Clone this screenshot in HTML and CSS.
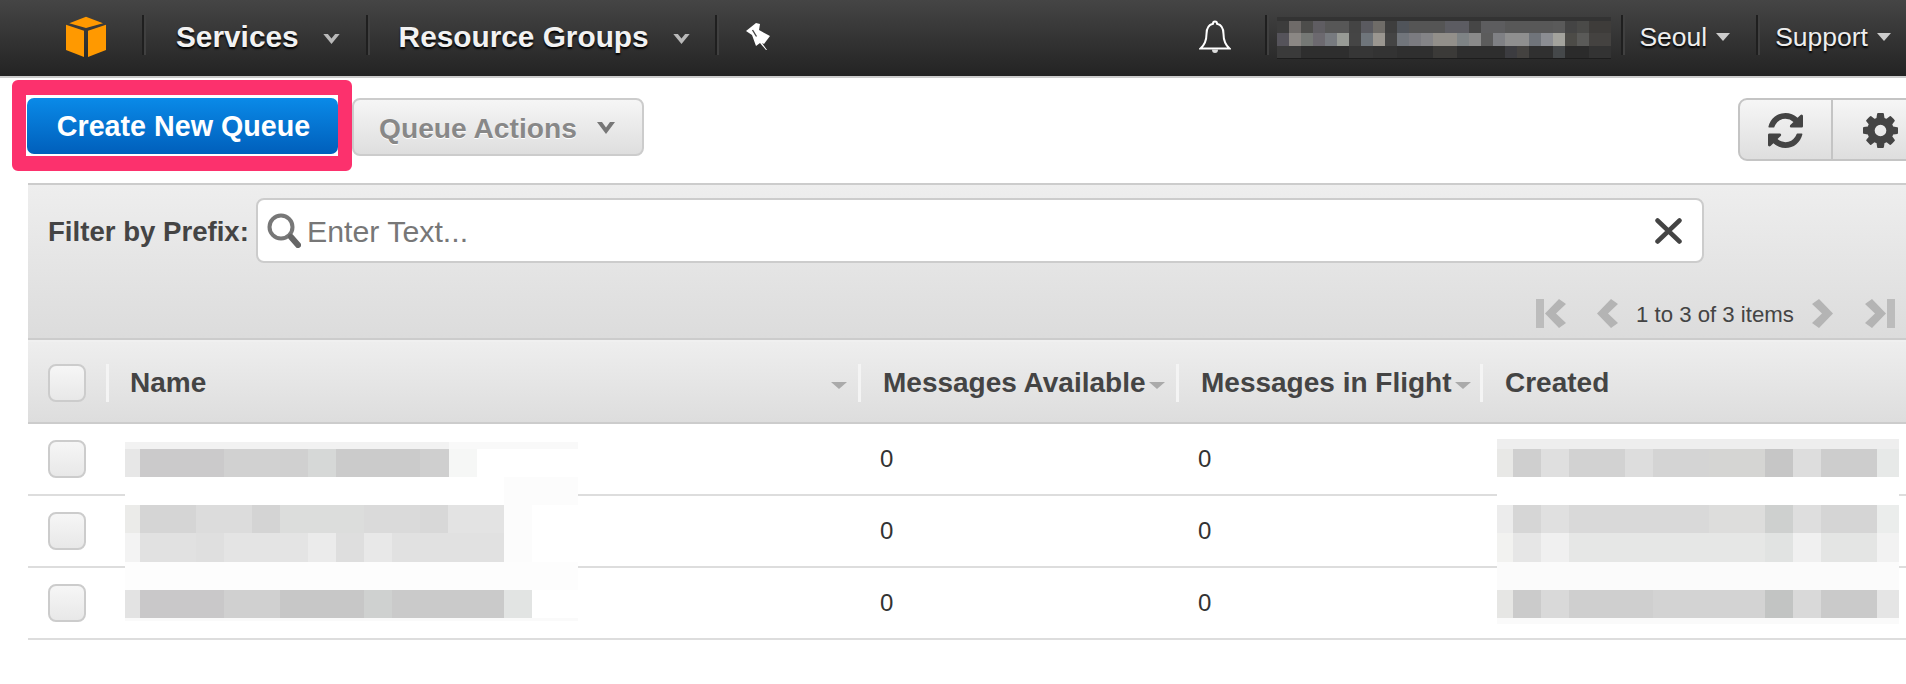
FILE: index.html
```html
<!DOCTYPE html>
<html lang="en">
<head>
<meta charset="utf-8">
<title>Simple Queue Service</title>
<link rel="stylesheet" href="styles.css">
</head>
<body>
<header class="nav">
  <svg class="logo" viewBox="0 0 40 41" aria-hidden="true"><path d="M20 .7 37 7.3 20 12 3.3 7.3z"/><path d="M0 8.7 18 14.7V41L0 34z"/><path d="M40 8.7 22 14.7V41L40 34z"/></svg>
  <span class="sep sep-logo"></span>
  <span class="nav-strong services">Services</span>
  <svg class="nav-chev" viewBox="0 0 18 11" aria-hidden="true"><path d="M0 0h5l4 5 4-5h5L9 11z"/></svg>
  <span class="sep sep-after-chev"></span>
  <span class="nav-strong groups">Resource Groups</span>
  <svg class="nav-chev" viewBox="0 0 18 11" aria-hidden="true"><path d="M0 0h5l4 5 4-5h5L9 11z"/></svg>
  <span class="sep sep-after-chev2"></span>
  <svg class="pin" viewBox="0 0 24 27" aria-hidden="true"><path fill="#fff" d="M10 0 14 1 13 7 24 13 18 21 16 20 21 27H20L14 20 10 23 6 12 0 8z"/><path stroke="#444" stroke-width="1.4" d="M6.500 7 10.500 13.500"/></svg>
  <svg class="bell" viewBox="0 0 32 34" aria-hidden="true"><path fill="none" stroke="#fff" stroke-width="2" d="M16 1.500c-1 0-2 .8-2 2.300C9 5 7.500 9 7.500 14c0 6-2 11-6 14.500h29c-4-3.500-6-8.500-6-14.500 0-5-1.500-9-6.500-10.200 0-1.500-1-2.300-2-2.300z"/><path fill="#ddd" d="M13 29.500h6a3 3.500 0 0 1-6 0z"/></svg>
  <span class="sep sep-bell"></span>
  <svg class="account" viewBox="0 0 334 42" shape-rendering="crispEdges" aria-hidden="true">
    <rect width="334" height="42" fill="#333"/>
    <g transform="translate(0 4)">
      <rect width="12" height="12" fill="#3c3c3c"/><rect x="12" width="12" height="12" fill="#6f6b69"/><rect x="24" width="12" height="12" fill="#4d4d4b"/><rect x="36" width="12" height="12" fill="#5f5d62"/><rect x="48" width="24" height="12" fill="#575757"/><rect x="72" width="12" height="12" fill="#444"/><rect x="84" width="12" height="12" fill="#5a5a60"/><rect x="96" width="12" height="12" fill="#6f6c68"/><rect x="108" width="12" height="12" fill="#3e3e3e"/><rect x="120" width="12" height="12" fill="#50545a"/><rect x="132" width="36" height="12" fill="#555"/><rect x="168" width="24" height="12" fill="#5c5c62"/><rect x="192" width="12" height="12" fill="#464646"/><rect x="204" width="24" height="12" fill="#5d5d5f"/><rect x="228" width="48" height="12" fill="#585858"/><rect x="276" width="12" height="12" fill="#5a5a5a"/><rect x="288" width="12" height="12" fill="#444"/><rect x="300" width="12" height="12" fill="#4a4a48"/><rect x="312" width="22" height="12" fill="#3e3c3a"/>
    </g>
    <g transform="translate(0 16)">
      <rect width="12" height="13" fill="#55535a"/><rect x="12" width="12" height="13" fill="#8b8784"/><rect x="24" width="12" height="13" fill="#757875"/><rect x="36" width="12" height="13" fill="#6c696f"/><rect x="48" width="12" height="13" fill="#777a7f"/><rect x="60" width="12" height="13" fill="#979a95"/><rect x="72" width="12" height="13" fill="#454545"/><rect x="84" width="12" height="13" fill="#6f757b"/><rect x="96" width="12" height="13" fill="#9a9690"/><rect x="108" width="12" height="13" fill="#444"/><rect x="120" width="12" height="13" fill="#71757b"/><rect x="132" width="12" height="13" fill="#7b7b80"/><rect x="144" width="12" height="13" fill="#848487"/><rect x="156" width="24" height="13" fill="#928f8a"/><rect x="180" width="12" height="13" fill="#7e8385"/><rect x="192" width="12" height="13" fill="#8a8a8a"/><rect x="204" width="12" height="13" fill="#5c5c5c"/><rect x="216" width="12" height="13" fill="#7f8084"/><rect x="228" width="24" height="13" fill="#8f8f8f"/><rect x="252" width="12" height="13" fill="#70747a"/><rect x="264" width="12" height="13" fill="#8b8d92"/><rect x="276" width="12" height="13" fill="#a3a39d"/><rect x="288" width="12" height="13" fill="#4c4b47"/><rect x="300" width="12" height="13" fill="#5a5a58"/><rect x="312" width="22" height="13" fill="#444240"/>
    </g>
    <g transform="translate(0 29)">
      <rect width="24" height="12" fill="#3a3a3a"/><rect x="24" width="48" height="12" fill="#2e2e2e"/><rect x="72" width="24" height="12" fill="#363636"/><rect x="96" width="24" height="12" fill="#333"/><rect x="120" width="48" height="12" fill="#2f2f2f"/><rect x="156" width="24" height="12" fill="#3b3a38"/><rect x="180" width="48" height="12" fill="#2e2e2e"/><rect x="228" width="12" height="12" fill="#3c3c40"/><rect x="240" width="12" height="12" fill="#444240"/><rect x="252" width="24" height="12" fill="#303030"/><rect x="276" width="12" height="12" fill="#45484a"/><rect x="288" width="24" height="12" fill="#2b2b2b"/><rect x="312" width="22" height="12" fill="#333"/>
    </g>
    <rect y="41" width="334" height="1" fill="#1d1d1d"/>
  </svg>
  <span class="sep sep-account"></span>
  <span class="nav-light seoul">Seoul</span>
  <svg class="nav-caret" viewBox="0 0 14 8" aria-hidden="true"><path d="M0 0h14L7 8z"/></svg>
  <span class="sep sep-seoul"></span>
  <span class="nav-light support">Support</span>
  <svg class="nav-caret" viewBox="0 0 14 8" aria-hidden="true"><path d="M0 0h14L7 8z"/></svg>
</header>

<section class="toolbar">
  <div class="highlight"><button class="btn-primary">Create New Queue</button></div>
  <button class="btn-actions">Queue Actions
    <svg class="actions-chev" viewBox="0 0 18 12" aria-hidden="true"><path d="M0 0h5l4 5.500L13 0h5L9 12z"/></svg>
  </button>
  <div class="tools">
    <button class="tool tool-refresh"><svg class="tool-icon" viewBox="128 128 1536 1536" aria-hidden="true"><path d="M1639 1056q0 5-1 7-64 268-268 434.500t-478 166.500q-146 0-282.500-55t-243.500-157l-129 129q-19 19-45 19t-45-19-19-45v-448q0-26 19-45t45-19h448q26 0 45 19t19 45-19 45l-137 137q71 66 161 102t187 36q134 0 250-65t186-179q11-17 53-117 8-23 30-23h192q13 0 22.500 9.500t9.500 22.500zm25-800v448q0 26-19 45t-45 19h-448q-26 0-45-19t-19-45 19-45l138-138q-148-137-349-137-134 0-250 65t-186 179q-11 17-53 117-8 23-30 23h-199q-13 0-22.500-9.500t-9.500-22.500v-7q65-268 270-434.500t480-166.500q146 0 284 55.500t245 156.500l130-129q19-19 45-19t45 19 19 45z"/></svg></button>
    <button class="tool tool-gear"><svg class="tool-icon" viewBox="128 128 1536 1536" aria-hidden="true"><path d="M1152 896q0-106-75-181t-181-75-181 75-75 181 75 181 181 75 181-75 75-181zm512-109v222q0 12-8 23t-20 13l-185 28q-19 54-39 91 35 50 107 138 10 12 10 25t-9 23q-27 37-99 108t-94 71q-12 0-26-9l-138-108q-44 23-91 38-16 136-29 186-7 28-36 28h-222q-14 0-24.500-8.500t-11.500-21.500l-28-184q-49-16-90-37l-141 107q-10 9-25 9-14 0-25-11-126-114-165-168-7-10-7-23 0-12 8-23 15-21 51-66.500t54-70.500q-27-50-41-99l-183-27q-13-2-21-12.500t-8-23.500v-222q0-12 8-23t19-13l186-28q14-46 39-92-40-57-107-138-10-12-10-24 0-10 9-23 26-36 98.500-107.500t94.500-71.500q13 0 26 10l138 107q44-23 91-38 16-136 29-186 7-28 36-28h222q14 0 24.500 8.500t11.500 21.500l28 184q49 16 90 37l142-107q9-9 24-9 13 0 25 10 129 119 165 170 7 8 7 22 0 12-8 23-15 21-51 66.500t-54 70.500q26 50 41 98l183 28q13 2 21 12.500t8 23.500z"/></svg></button>
  </div>
</section>

<main class="panel">
  <div class="filter">
    <div class="filter-row">
      <label class="filter-label">Filter by Prefix:</label>
      <div class="search">
        <svg class="search-icon" viewBox="0 0 34 35" aria-hidden="true"><circle cx="14" cy="14" r="11.500" fill="none" stroke="#777" stroke-width="4"/><path stroke="#666" stroke-width="6" stroke-linecap="round" d="M24 24 31 32"/></svg>
        <span class="placeholder">Enter Text...</span>
        <svg class="clear" viewBox="0 0 27 26" aria-hidden="true"><path stroke="#444" stroke-width="4.500" stroke-linecap="round" d="M2.500 2.500 24.500 23.500M24.500 2.500 2.500 23.500"/></svg>
      </div>
    </div>
    <div class="pager">
      <svg class="pg-first" viewBox="0 0 30 29" aria-hidden="true"><rect width="8" height="29" fill="#bcbcbc"/><path fill="#b4b4b4" d="M23 0 30 5 20 14.500 30 24 23 29 9 14.500z"/></svg>
      <svg class="pg-prev" viewBox="0 0 21 29" aria-hidden="true"><path fill="#b4b4b4" d="M14 0 21 5 11 14.500 21 24 14 29 0 14.500z"/></svg>
      <span class="pg-text">1 to 3 of 3 items</span>
      <svg class="pg-next" viewBox="0 0 21 29" aria-hidden="true"><path fill="#b4b4b4" d="M7 0 0 5 10 14.500 0 24 7 29 21 14.500z"/></svg>
      <svg class="pg-last" viewBox="0 0 30 29" aria-hidden="true"><rect x="22" width="8" height="29" fill="#bcbcbc"/><path fill="#b4b4b4" d="M7 0 0 5 10 14.500 0 24 7 29 21 14.500z"/></svg>
    </div>
  </div>

  <div class="thead cols">
    <div class="cell-check"><span class="check"></span></div>
    <div class="th th-name"><span>Name</span><i class="sort sort-end"></i></div>
    <div class="th"><span>Messages Available</span><i class="sort"></i></div>
    <div class="th"><span>Messages in Flight</span><i class="sort"></i></div>
    <div class="th"><span>Created</span><i class="sort sort-end"></i></div>
  </div>

  <div class="rows">
    <div class="row cols"><div class="cell-check"><span class="check"></span></div><div></div><div class="td">0</div><div class="td">0</div><div></div></div>
    <div class="row cols"><div class="cell-check"><span class="check"></span></div><div></div><div class="td">0</div><div class="td">0</div><div></div></div>
    <div class="row cols"><div class="cell-check"><span class="check"></span></div><div></div><div class="td">0</div><div class="td">0</div><div></div></div>

    <svg class="redact redact-name" viewBox="0 0 453 179" shape-rendering="crispEdges" aria-hidden="true">
      <rect width="453" height="179" fill="#fff"/>
      <rect width="324" height="7" fill="#f2f2f2"/><rect x="324" width="129" height="7" fill="#f9f9f9"/>
      <g transform="translate(0 7)">
        <rect width="15" height="28" fill="#e7e7e7"/><rect x="15" width="84" height="28" fill="#cbcacb"/><rect x="99" width="56" height="28" fill="#d1d1d1"/><rect x="155" width="28" height="28" fill="#d0d0d0"/><rect x="183" width="28" height="28" fill="#d6d8d7"/><rect x="211" width="84" height="28" fill="#cbcbcb"/><rect x="295" width="29" height="28" fill="#cfcfcf"/><rect x="324" width="28" height="28" fill="#f6f7f6"/>
      </g>
      <rect x="379" y="35" width="74" height="28" fill="#fcfcfc"/>
      <g transform="translate(0 63)">
        <rect width="15" height="28" fill="#ebebe9"/><rect x="15" width="56" height="28" fill="#d5d5d5"/><rect x="71" width="56" height="28" fill="#dcdcdc"/><rect x="127" width="28" height="28" fill="#d4d4d4"/><rect x="155" width="84" height="28" fill="#dcdddc"/><rect x="239" width="56" height="28" fill="#dadada"/><rect x="295" width="28" height="28" fill="#d8d8d8"/><rect x="323" width="56" height="28" fill="#e3e3e3"/><rect x="379" width="28" height="28" fill="#fcfcfc"/>
      </g>
      <g transform="translate(0 91)">
        <rect width="15" height="29" fill="#f3f3f3"/><rect x="15" width="56" height="29" fill="#e1e1e1"/><rect x="71" width="28" height="29" fill="#dfdfdf"/><rect x="99" width="84" height="29" fill="#e4e4e4"/><rect x="183" width="28" height="29" fill="#ebebeb"/><rect x="211" width="28" height="29" fill="#dedede"/><rect x="239" width="28" height="29" fill="#e8e8e8"/><rect x="267" width="112" height="29" fill="#e1e1e1"/><rect x="379" width="28" height="29" fill="#fcfcfc"/>
      </g>
      <rect y="120" width="453" height="28" fill="#fdfdfd"/>
      <g transform="translate(0 148)">
        <rect width="15" height="28" fill="#e3e3e3"/><rect x="15" width="84" height="28" fill="#c9c8c9"/><rect x="99" width="56" height="28" fill="#d0d0d0"/><rect x="155" width="84" height="28" fill="#c7c7c7"/><rect x="239" width="28" height="28" fill="#cfd1d0"/><rect x="267" width="112" height="28" fill="#cacaca"/><rect x="379" width="28" height="28" fill="#e2e4e3"/>
      </g>
      <rect y="176" width="453" height="3" fill="#fafafa"/>
    </svg>

    <svg class="redact redact-date" viewBox="0 0 402 185" shape-rendering="crispEdges" aria-hidden="true">
      <rect width="402" height="185" fill="#fdfdfd"/>
      <rect width="402" height="10" fill="#eeeeee"/>
      <g transform="translate(0 10)">
        <rect width="16" height="28" fill="#e8e8e6"/><rect x="16" width="28" height="28" fill="#cfcfcf"/><rect x="44" width="28" height="28" fill="#dfdfdf"/><rect x="72" width="56" height="28" fill="#d2d2d2"/><rect x="128" width="28" height="28" fill="#dddddd"/><rect x="156" width="56" height="28" fill="#d4d4d4"/><rect x="212" width="56" height="28" fill="#d5d5d3"/><rect x="268" width="28" height="28" fill="#c6c6c6"/><rect x="296" width="28" height="28" fill="#dddddd"/><rect x="324" width="56" height="28" fill="#cdcdcd"/><rect x="380" width="22" height="28" fill="#e7e9e8"/>
      </g>
      <rect y="38" width="402" height="28" fill="#fff"/>
      <g transform="translate(0 66)">
        <rect width="16" height="28" fill="#ececec"/><rect x="16" width="28" height="28" fill="#d6d6d6"/><rect x="44" width="28" height="28" fill="#e0e0e0"/><rect x="72" width="140" height="28" fill="#d9d9d9"/><rect x="212" width="56" height="28" fill="#dddddc"/><rect x="268" width="28" height="28" fill="#ced0cf"/><rect x="296" width="28" height="28" fill="#dedede"/><rect x="324" width="56" height="28" fill="#d5d5d5"/><rect x="380" width="22" height="28" fill="#ebedec"/>
      </g>
      <g transform="translate(0 94)">
        <rect width="16" height="29" fill="#f2f2f0"/><rect x="16" width="28" height="29" fill="#e6e6e6"/><rect x="44" width="28" height="29" fill="#f0f0f0"/><rect x="72" width="196" height="29" fill="#e6e7e6"/><rect x="268" width="28" height="29" fill="#e1e3e2"/><rect x="296" width="28" height="29" fill="#f0f0f0"/><rect x="324" width="56" height="29" fill="#e4e5e4"/><rect x="380" width="22" height="29" fill="#f2f2f2"/>
      </g>
      <rect y="123" width="402" height="28" fill="#fbfbfb"/>
      <g transform="translate(0 151)">
        <rect width="16" height="28" fill="#e6e6e4"/><rect x="16" width="28" height="28" fill="#cbcbcb"/><rect x="44" width="28" height="28" fill="#d9d9d9"/><rect x="72" width="84" height="28" fill="#cfcfcf"/><rect x="156" width="112" height="28" fill="#d3d3d3"/><rect x="268" width="28" height="28" fill="#c2c4c3"/><rect x="296" width="28" height="28" fill="#d9d9d9"/><rect x="324" width="56" height="28" fill="#cacaca"/><rect x="380" width="22" height="28" fill="#e5e5e5"/>
      </g>
      <rect y="179" width="402" height="6" fill="#fafafa"/>
    </svg>
  </div>
</main>
</body>
</html>
```
FILE: styles.css
```css
* { box-sizing: border-box; }
html, body { margin: 0; padding: 0; }
body {
  width: 1906px;
  height: 684px;
  overflow: hidden;
  background: #fff;
  font-family: "Liberation Sans", Arial, sans-serif;
  color: #444;
}
button { font-family: inherit; padding: 0; cursor: pointer; }

/* top navigation */
.nav {
  display: flex;
  align-items: center;
  height: 78px;
  padding: 0 0 2px 66px;
  border-bottom: 2px solid #ccc;
  background: linear-gradient(#454545, #232323);
}
.logo { width: 40px; height: 41px; fill: #f90; margin-top: -1px; }
.sep {
  width: 4px;
  height: 40px;
  flex: none;
  border-left: 2px solid #1f1f1f;
  border-right: 2px solid #404040;
  margin-top: -4px;
}
.sep-logo { margin-left: 36px; margin-right: 30px; }
.nav-strong {
  font-size: 29.800px;
  font-weight: 700;
  color: #f2f2f2;
  text-shadow: 0 2px 2px #000;
}
.nav-light {
  font-size: 26.500px;
  color: #eee;
  text-shadow: 0 2px 2px #000;
}
.nav-chev { width: 17px; height: 10px; margin-left: 24px; fill: #b9b9b9; margin-top: 3px; }
.sep-after-chev { margin-left: 26px; margin-right: 29px; }
.sep-after-chev2 { margin-left: 25px; margin-right: 27px; }
.pin { width: 24px; height: 27px; margin-top: -2px; }
.bell { width: 32px; height: 34px; margin-left: auto; margin-top: -1px; }
.sep-bell { margin-left: 34px; margin-right: 8px; }
.account { width: 334px; height: 42px; margin-top: 2px; }
.sep-account { margin-left: 10px; margin-right: 14px; }
.nav-caret { width: 14px; height: 8px; margin-left: 9px; fill: #ccc; margin-top: 0; }
.sep-seoul { margin-left: 26px; margin-right: 15px; }
.support + .nav-caret { margin-right: 15px; }

/* action bar */
.toolbar {
  display: flex;
  align-items: flex-start;
  margin: 2px 0 12px 12px;
}
.highlight {
  width: 340px;
  height: 91px;
  padding: 3px 0 3px 1px;
  border: 15px solid #fc316d;
  border-width: 15px 14px;
  border-radius: 6px;
  background: #fff;
}
.btn-primary {
  display: block;
  width: 311px;
  height: 56px;
  padding-left: 2px;
  border: 0;
  border-radius: 7px;
  background: linear-gradient(#0a8ae8, #005fbb);
  color: #fff;
  font-size: 28.700px;
  font-weight: 700;
}
.btn-actions {
  display: flex;
  align-items: center;
  width: 292px;
  height: 58px;
  margin-top: 18px;
  padding: 2px 0 0 25px;
  border: 2px solid #ccc;
  border-radius: 8px;
  background: linear-gradient(#f6f6f6, #dedede);
  color: #888;
  font-size: 28.200px;
  font-weight: 700;
  text-shadow: 0 1px 0 #fff;
}
.actions-chev { width: 18px; height: 12px; margin-left: 20px; fill: #777; }
.tools {
  display: flex;
  margin: 18px -24px 0 auto;
  height: 63px;
  border: 2px solid #c4c4c4;
  border-radius: 9px;
  background: linear-gradient(#f6f6f6, #dedede);
}
.tool {
  display: flex;
  align-items: center;
  justify-content: center;
  padding-top: 2px;
  border: 0;
  background: none;
}
.tool-refresh { width: 93px; border-right: 2px solid #c4c4c4; }
.tool-gear { width: 95px; }
.tool-icon { width: 35px; height: 35px; fill: #444; }

/* filter area */
.panel {
  margin-left: 28px;
  width: 1878px;
  overflow: hidden;
}
.filter {
  height: 157px;
  padding-top: 13px;
  border-top: 2px solid #ccc;
  border-bottom: 2px solid #ccc;
  background: linear-gradient(#eeeeee, #dcdcdc);
}
.filter-row { display: flex; align-items: center; padding-left: 20px; }
.filter-label { font-size: 27.600px; font-weight: 700; color: #444; width: 208px; padding-top: 2px; white-space: nowrap; }
.search {
  display: flex;
  align-items: center;
  width: 1448px;
  height: 65px;
  padding: 0 20px 0 9px;
  border: 2px solid #ccc;
  border-radius: 8px;
  background: #fff;
}
.search-icon { width: 34px; height: 35px; }
.placeholder { font-size: 30.300px; color: #777; margin-left: 6px; padding-top: 2px; }
.clear { width: 27px; height: 26px; margin-left: auto; }
.pager {
  display: flex;
  align-items: center;
  margin-top: 35px;
  padding-left: 1508px;
}
.pg-first { width: 30px; height: 29px; }
.pg-prev { width: 21px; height: 29px; margin-left: 31px; }
.pg-text { font-size: 22.200px; color: #444; margin-left: 18px; padding-top: 4px; white-space: nowrap; }
.pg-next { width: 21px; height: 29px; margin-left: 18px; }
.pg-last { width: 30px; height: 29px; margin-left: 32px; }

/* queue table */
.cols {
  display: grid;
  grid-template-columns: 78px 752px 318px 304px 426px;
}
.thead {
  height: 84px;
  padding-top: 2px;
  align-items: center;
  border-top: 2px solid #f0f0f0;
  border-bottom: 2px solid #ccc;
  background: linear-gradient(#eeeeee, #dddddd);
}
.cell-check { display: flex; padding-left: 20px; }
.check {
  display: block;
  width: 38px;
  height: 38px;
  border: 2px solid #ccc;
  border-radius: 8px;
  background: linear-gradient(#f6f6f6, #e8e8e8);
}
.th {
  display: flex;
  align-items: center;
  height: 38px;
  padding-left: 22px;
  border-left: 3px solid #f4f4f4;
  font-size: 28px;
  font-weight: 700;
  color: #444;
  white-space: nowrap;
}
.th-name { padding-left: 21px; }
.sort {
  display: block;
  width: 0;
  height: 0;
  margin: 4px 0 0 3px;
  border-style: solid;
  border-width: 7px 8px 0;
  border-color: #aaa transparent transparent;
}
.sort-end { margin-left: auto; margin-right: 11px; flex: none; }
.th:last-child .sort-end { margin-right: -19px; }
.rows { position: relative; }
.row {
  height: 72px;
  align-items: center;
  border-bottom: 2px solid #ddd;
}
.td { padding-left: 22px; font-size: 24px; color: #333; }
.redact { position: absolute; display: block; }
.redact-name { left: 97px; top: 18px; width: 453px; height: 179px; }
.redact-date { left: 1469px; top: 15px; width: 402px; height: 185px; }
```
